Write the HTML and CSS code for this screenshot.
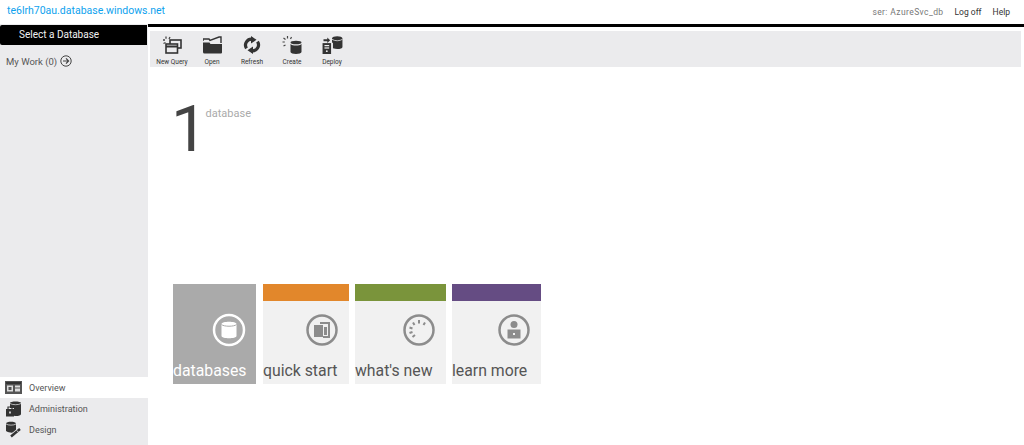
FILE: index.html
```html
<!DOCTYPE html>
<html lang="en">
<head>
  <meta charset="UTF-8" />
  <title>Database Manager</title>
  <link rel="stylesheet" href="styles.css">
</head>
<body>

  <!-- HEADER -->
  <header class="topbar">
    <a class="server" href="#">te6lrh70au.database.windows.net</a>
    <div class="account">
      <span class="user">ser: AzureSvc_db</span>
      <a href="#">Log off</a>
      <a href="#">Help</a>
    </div>
  </header>

  <div class="layout">

    <!-- SIDEBAR -->
    <aside class="sidebar">
      <div class="select-db">Select a Database</div>
      <div class="my-work">
        My Work (0)
        <svg width="12" height="12" viewBox="0 0 12 12"><circle cx="6" cy="6" r="5.2" fill="none" stroke="#444" stroke-width="1"/><path d="M3 6h5.5M6 3.4 8.6 6 6 8.6" fill="none" stroke="#444" stroke-width="1.2"/></svg>
      </div>
      <ul class="side-nav">
        <li class="active">
          <svg width="17" height="13" viewBox="0 0 17 13"><rect width="17" height="13" fill="#555"/><rect x="1" y="1" width="15" height="2" fill="#333"/><rect x="2" y="4.500" width="6" height="6" fill="#ddd"/><rect x="3.500" y="6" width="3" height="3" fill="#555"/><rect x="10" y="4.500" width="5" height="2" fill="#ddd"/><rect x="10" y="7.500" width="5" height="3" fill="#ddd"/></svg>
          Overview
        </li>
        <li>
          <svg width="17" height="17" viewBox="0 0 17 17"><path d="M5 3c0-2 11-2 11 0v11c0 2-5 2.300-7 1.800V8H5z" fill="#333"/><path d="M5 3.500c2 1.600 9 1.600 11 0" fill="none" stroke="#ebebed" stroke-width=".7"/><rect x="1" y="9" width="8" height="7.500" fill="#333"/><path d="M3 9V7h4v2" fill="none" stroke="#333" stroke-width="1.200"/><rect x="4.200" y="11.500" width="1.600" height="2" fill="#ebebed"/></svg>
          Administration
        </li>
        <li>
          <svg width="17" height="17" viewBox="0 0 17 17"><path d="M1 2.500c0-2.400 10-2.400 10 0v7.500c0 2-7 2.400-10 0z" fill="#333"/><path d="M1 3c2 1.500 8 1.500 10 0" fill="none" stroke="#ebebed" stroke-width=".7"/><path d="M6 15.500 15.500 7.500" stroke="#ebebed" stroke-width="4"/><path d="M6 15.500 15 8" stroke="#333" stroke-width="2.400"/><path d="M11.500 9.500l2 1.500" stroke="#ebebed" stroke-width=".8"/></svg>
          Design
        </li>
      </ul>
    </aside>

    <main class="content">
      <!-- TOOLBAR -->
      <div class="toolbar">
        <div class="tool">
          <svg width="20" height="18" viewBox="0 0 20 18"><path d="M1 4h2M4 0.500v2.200M1.500 7.500l2-1M8 1 7 3" stroke="#444" stroke-width="1.300"/><rect x="8" y="4" width="11" height="8" fill="none" stroke="#333" stroke-width="1.600"/><rect x="4" y="8" width="11.500" height="9" fill="#ebebed" stroke="#333" stroke-width="1.600"/><path d="M4 10.500h11.500" stroke="#333" stroke-width="2"/></svg>
          <span>New Query</span>
        </div>
        <div class="tool">
          <svg width="19" height="18" viewBox="0 0 19 18"><path d="M0 5V3h6l1 1.500 9-3.500h2v6" fill="none" stroke="#333" stroke-width="1.400"/><path d="M0 6.500h6.500l1 1.500H19v8.500a1 1 0 0 1-1 1H1.500a1.500 1.500 0 0 1-1.500-1.500z" fill="#333"/></svg>
          <span>Open</span>
        </div>
        <div class="tool">
          <svg width="18" height="18" viewBox="0 0 18 18"><path d="M9.500 3.200a6 6 0 0 0-6 9.200" fill="none" stroke="#333" stroke-width="3.200"/><path d="M8.500 14.800a6 6 0 0 0 6-9.200" fill="none" stroke="#333" stroke-width="3.200"/><path d="M8 0l5.500 3.800L8 7.500zM10 10.500l-5.500 3.800L10 18z" fill="#333"/></svg>
          <span>Refresh</span>
        </div>
        <div class="tool">
          <svg width="20" height="18" viewBox="0 0 20 18"><path d="M0.500 6h2.300M1.500 2l2 1.500M5.500 0v2.500M9.500 1 8.500 3M1.500 10l2-1" stroke="#444" stroke-width="1.200"/><ellipse cx="14" cy="6.500" rx="5.500" ry="1.800" fill="#333"/><path d="M8.500 8v8c0 2.600 11 2.600 11 0V8c-2 2-9 2-11 0z" fill="#333"/></svg>
          <span>Create</span>
        </div>
        <div class="tool">
          <svg width="21" height="19" viewBox="0 0 21 19"><path d="M1 3.500h4V1.500l3 3-3 3v-2H1z" fill="#333"/><rect x="0" y="7.500" width="9" height="11.500" fill="#333"/><rect x="2" y="9.500" width="5" height="1.300" fill="#eee"/><rect x="2" y="12" width="5" height="1.300" fill="#eee"/><circle cx="4.500" cy="16" r="1" fill="#eee"/><path d="M10 2.500c0-3 11-3 11 0v9c0 2.200-6 2.800-10 1.500v-6h-1z" fill="#333"/><path d="M10 3.500c3 2 8 2 11 0" stroke="#eee" fill="none" stroke-width=".8"/></svg>
          <span>Deploy</span>
        </div>
      </div>

      <!-- COUNT -->
      <div class="count">
        <span class="count-num">1</span>
        <span class="count-label">database</span>
      </div>

      <!-- TILES -->
      <div class="tiles">
        <div class="tile tile-db">
          <svg class="tile-icon" width="34" height="34" viewBox="0 0 34 34"><circle cx="17" cy="17" r="15" fill="none" stroke="#fff" stroke-width="2.500"/><path d="M9.500 11c0-3 15-3 15 0v12c0 3-15 3-15 0z" fill="#fff"/><path d="M9.500 11.500c2 2.300 13 2.300 15 0" fill="none" stroke="#aaa"/></svg>
          <span class="tile-name">databases</span>
        </div>
        <div class="tile tile-start">
          <div class="band"></div>
          <svg class="tile-icon" width="34" height="34" viewBox="0 0 34 34"><circle cx="17" cy="17" r="14.500" fill="none" stroke="#8c8c8c" stroke-width="2.500"/><rect x="9" y="12" width="9" height="12" fill="#8c8c8c"/><path d="M15 10h9v14h-6" fill="none" stroke="#8c8c8c" stroke-width="2"/><rect x="19" y="14" width="3" height="8" fill="#8c8c8c"/></svg>
          <span class="tile-name">quick start</span>
        </div>
        <div class="tile tile-new">
          <div class="band"></div>
          <svg class="tile-icon" width="34" height="34" viewBox="0 0 34 34"><circle cx="17" cy="17" r="14.500" fill="none" stroke="#8c8c8c" stroke-width="2.500"/><path d="M17 7v3.500M11 9.500l1.500 2.500M23 9.500 21.500 12M7.500 14.500l3 1M7.500 20l3-1M10.500 24l2.500-2" stroke="#8c8c8c" stroke-width="2"/></svg>
          <span class="tile-name">what's new</span>
        </div>
        <div class="tile tile-learn">
          <div class="band"></div>
          <svg class="tile-icon" width="34" height="34" viewBox="0 0 34 34"><circle cx="17" cy="17" r="14.500" fill="none" stroke="#8c8c8c" stroke-width="2.500"/><circle cx="17" cy="11.500" r="3.500" fill="#8c8c8c"/><path d="M10.500 16.500h13v9h-13z" fill="#8c8c8c"/><rect x="16" y="20" width="2" height="2" fill="#f1f1f1"/></svg>
          <span class="tile-name">learn more</span>
        </div>
      </div>
    </main>

  </div>

</body>
</html>
```

FILE: styles.css
```css
/* Global Styles */
* { box-sizing: border-box; margin: 0; padding: 0; }

html, body { height: 100%; overflow: hidden; }

body {
  background-color: #fff;
  font-family: Roboto, "Open Sans", sans-serif;
  color: #444;
  display: flex;
  flex-direction: column;
}

a { text-decoration: none; color: inherit; }

/* Header */
.topbar {
  height: 24px;
  flex: none;
  display: flex;
  justify-content: space-between;
  padding: 3px 14px 0 7px;
}

.server {
  color: #0ea2ee;
  font-size: 10.500px;
  line-height: 16px;
}

.account {
  display: flex;
  gap: 11px;
  font-size: 8.500px;
  line-height: 18px;
  color: #333;
}

.account .user {
  color: #777;
  letter-spacing: 0.4px;
}

/* Layout */
.layout {
  flex: 1;
  display: flex;
  min-height: 0;
}

/* Sidebar */
.sidebar {
  width: 148px;
  flex: none;
  background-color: #ebebed;
  display: flex;
  flex-direction: column;
  padding-top: 1px;
}

.select-db {
  height: 20px;
  background-color: #000;
  color: #f0f0f0;
  font-size: 10px;
  line-height: 20px;
  padding-left: 19px;
  margin-right: 1px;
  border-radius: 2px 0 0 2px;
}

.my-work {
  display: flex;
  align-items: center;
  gap: 3px;
  font-size: 9.500px;
  color: #555;
  padding: 10px 0 0 6px;
}

.side-nav {
  list-style: none;
  margin-top: auto;
  margin-bottom: 5px;
}

.side-nav li {
  height: 21px;
  display: flex;
  align-items: center;
  gap: 7px;
  padding-left: 5px;
  font-size: 9px;
  color: #555;
}

.side-nav li.active { background-color: #fff; }

/* Content */
.content {
  flex: 1;
  min-width: 0;
  display: flex;
  flex-direction: column;
  border-top: 3px solid #000;
  padding-top: 4px;
}

.toolbar {
  height: 36px;
  flex: none;
  margin: 0 3px 0 2px;
  background-color: #ebebed;
  display: flex;
  padding-left: 2px;
}

.tool {
  width: 40px;
  display: flex;
  flex-direction: column;
  align-items: center;
  padding-top: 5px;
  font-size: 6.500px;
  color: #333;
}

.tool svg { height: 18px; flex: none; }
.tool span { margin-top: 4px; line-height: 9px; white-space: nowrap; }

/* Count */
.count {
  display: flex;
  align-items: flex-start;
  height: 217px;
  flex: none;
  padding: 24px 0 0 23px;
}

.count-num {
  font-size: 65px;
  line-height: 76px;
  letter-spacing: -4px;
  color: #444;
}

.count-label {
  font-size: 11px;
  color: #aaa;
  margin: 16px 0 0 2px;
}

/* Tiles */
.tiles {
  display: flex;
  margin-left: 25px;
  height: 100px;
}

.tile {
  position: relative;
  background-color: #f1f1f1;
  color: #555;
  margin-right: 6px;
  display: flex;
  flex-direction: column;
}

.tile-db { width: 83px; margin-right: 7px; background-color: #aaa; color: #fff; }
.tile-start { width: 86px; }
.tile-new { width: 91px; }
.tile-learn { width: 89px; }

.band { height: 17px; }
.tile-start .band { background-color: #e2872b; }
.tile-new .band { background-color: #7a943b; }
.tile-learn .band { background-color: #654c83; }

.tile-icon {
  position: absolute;
  top: 29px;
  right: 10px;
}

.tile-name {
  margin-top: auto;
  font-size: 15.800px;
  line-height: 27px;
  white-space: nowrap;
}
```
